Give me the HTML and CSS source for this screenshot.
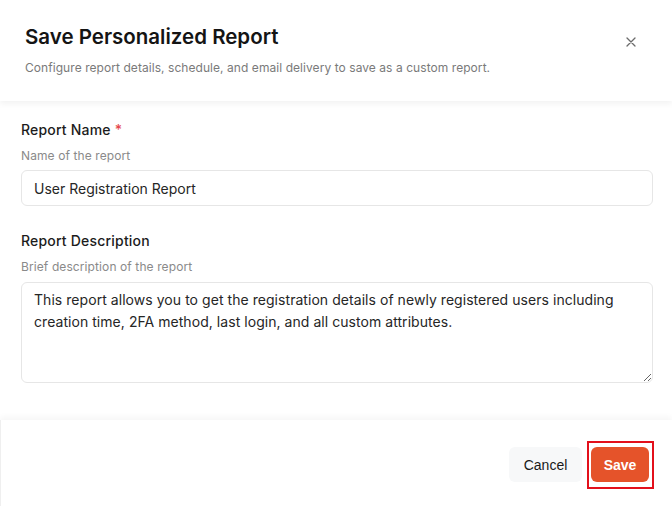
FILE: index.html
```html
<!DOCTYPE html>
<html lang="en">
<head>
<meta charset="utf-8">
<title>Save Personalized Report</title>
<link rel="stylesheet" href="styles.css">
</head>
<body>
<div class="modal">
  <header class="modal-header">
    <div class="header-text">
      <h1 class="title">Save Personalized Report</h1>
      <p class="subtitle">Configure report details, schedule, and email delivery to save as a custom report.</p>
    </div>
    <button class="close-btn" aria-label="Close">
      <svg width="10" height="10" viewBox="0 0 10 10"><path d="M1 1L9 9M9 1L1 9" stroke="#6b6b6b" stroke-width="1.3" stroke-linecap="round"/></svg>
    </button>
  </header>
  <main class="modal-body">
    <div class="field">
      <label class="label">Report Name <span class="req">*</span></label>
      <div class="help">Name of the report</div>
      <input class="input" type="text" value="User Registration Report">
    </div>
    <div class="field">
      <label class="label">Report Description</label>
      <div class="help">Brief description of the report</div>
      <textarea class="textarea">This report allows you to get the registration details of newly registered users including creation time, 2FA method, last login, and all custom attributes.</textarea>
    </div>
  </main>
  <footer class="modal-footer">
    <button class="btn btn-cancel">Cancel</button>
    <span class="highlight"><button class="btn btn-save">Save</button></span>
  </footer>
</div>
</body>
</html>
```

FILE: styles.css
```css
* { box-sizing: border-box; }
html, body { margin: 0; padding: 0; background: #ffffff; }
body {
  font-family: "Inter", "DejaVu Sans", sans-serif;
  color: #1f1f1f;
}
.modal {
  width: 672px;
  height: 506px;
  display: flex;
  flex-direction: column;
  background: #fff;
  overflow: hidden;
}
.modal-header {
  display: flex;
  justify-content: space-between;
  align-items: flex-start;
  padding: 23px 25px 0 25px;
  height: 101px;
  box-shadow: 0 3px 6px rgba(0,0,0,0.05);
  position: relative;
  z-index: 1;
}
.title {
  margin: 0;
  font-size: 20.5px;
  line-height: 28px;
  font-weight: 600;
  color: #141414;
  letter-spacing: 0;
}
.subtitle {
  margin: 9px 0 0 0;
  font-size: 12px;
  line-height: 16px;
  color: #7a7a7a;
  letter-spacing: 0.06px;
}
.close-btn {
  margin-top: 14px;
  margin-right: 11px;
  border: none;
  background: transparent;
  padding: 0;
  width: 10px;
  height: 10px;
  display: flex;
}
.modal-body {
  flex: 1;
  padding: 19px 19px 0 21px;
  display: flex;
  flex-direction: column;
  gap: 25px;
}
.field { display: flex; flex-direction: column; }
.label {
  font-size: 14px;
  line-height: 20px;
  font-weight: 500;
  color: #1c1c1c;
  letter-spacing: 0.2px;
}
.req { color: #e5484d; }
.help {
  margin-top: 8px;
  font-size: 12px;
  line-height: 16px;
  color: #8a8a8a;
  letter-spacing: 0.1px;
}
.input, .textarea {
  font-family: inherit;
  width: 100%;
  font-size: 14px;
  color: #262626;
  border: 1px solid #e6e6e6;
  border-radius: 6px;
  background: #fff;
  outline: none;
}
.input {
  margin-top: 6px;
  height: 36px;
  padding: 0 12px;
}
.textarea {
  margin-top: 7px;
  height: 101px;
  padding: 6px 12px;
  line-height: 22px;
  resize: vertical;
  letter-spacing: 0.05px;
}
.modal-footer {
  height: 86px;
  display: flex;
  justify-content: flex-end;
  align-items: flex-start;
  gap: 5px;
  padding: 21px 18px 0 0;
  box-shadow: 0 -3px 6px rgba(0,0,0,0.04);
  border-left: 1px solid #efefef;
  position: relative;
}
.btn {
  font-family: "Liberation Sans", Arial, sans-serif;
  font-size: 14px;
  height: 35px;
  border: none;
  border-radius: 6px;
  cursor: pointer;
}
.btn-cancel {
  margin-top: 6px;
  width: 73px;
  background: #f7f8f9;
  color: #1a1a1a;
}
.highlight {
  display: inline-flex;
  border: 2px solid #e3101b;
  padding: 4px 3px 5px 2px;
}
.btn-save {
  width: 58px;
  background: #e5532a;
  color: #fff;
  font-weight: 700;
}
```
